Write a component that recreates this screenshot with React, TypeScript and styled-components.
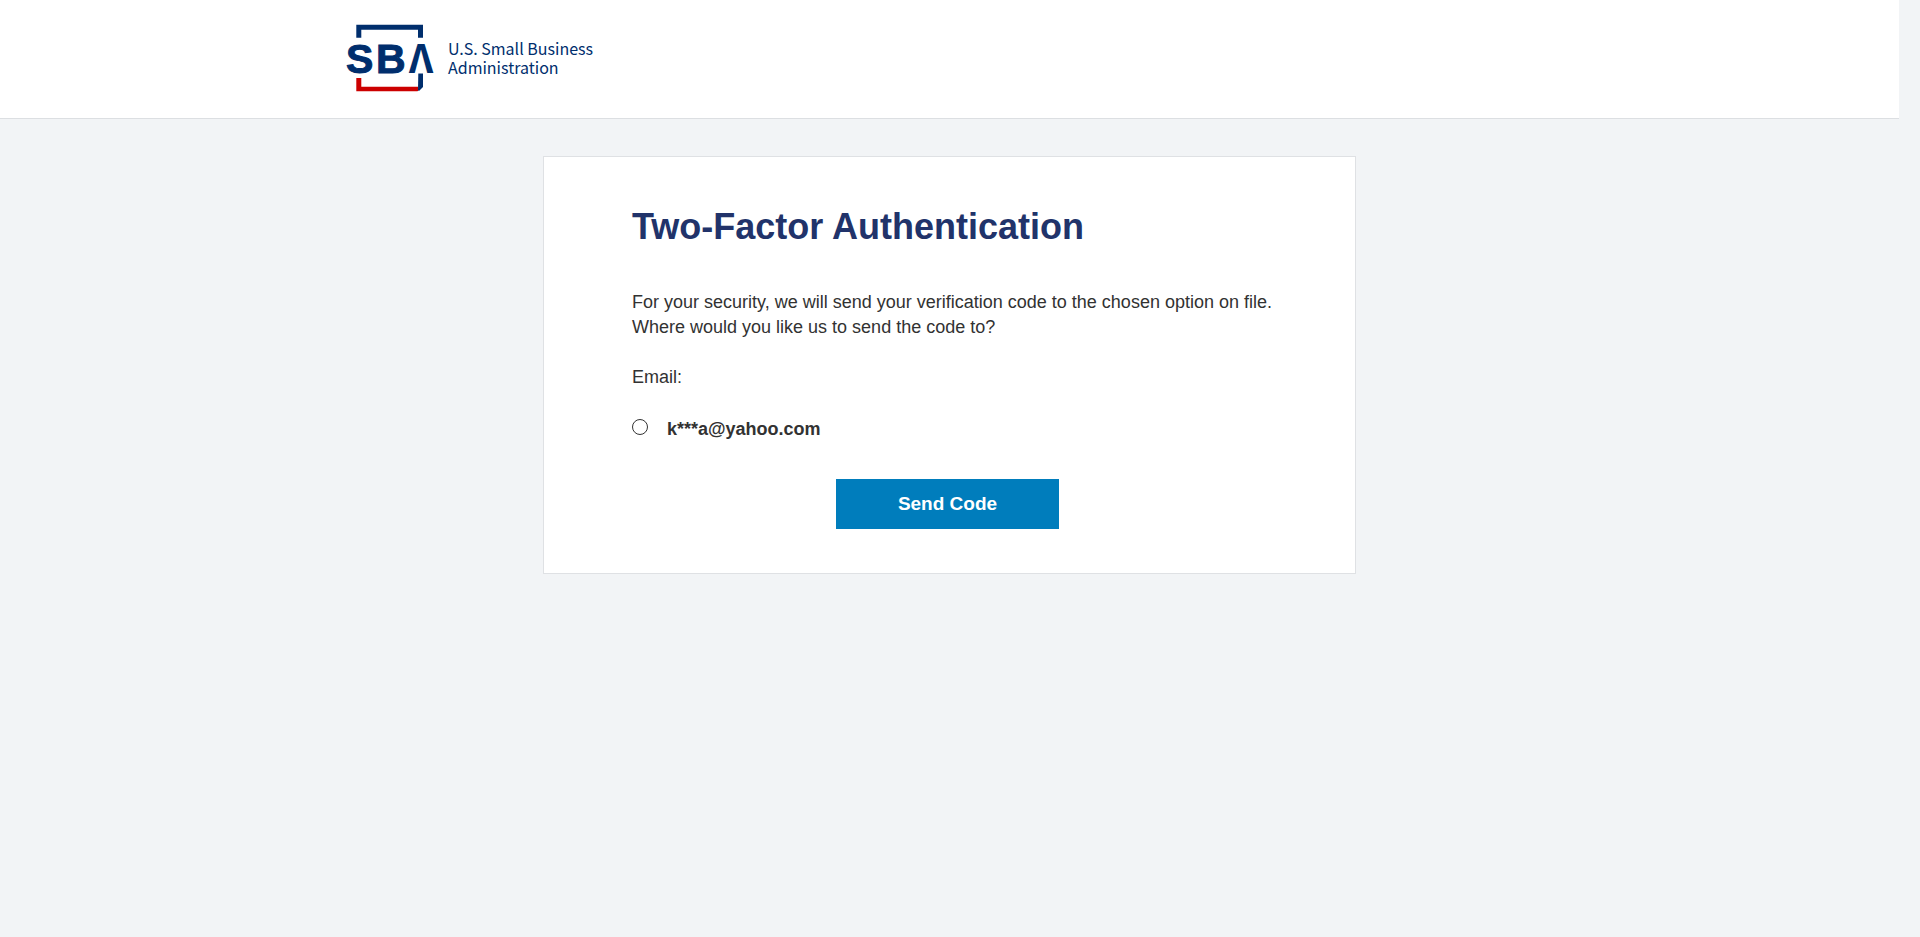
import React from "react";
import styled, { createGlobalStyle } from "styled-components";

const GlobalStyle = createGlobalStyle`
  *, *::before, *::after { box-sizing: border-box; }
  html { background: #f2f4f6; }
  body {
    margin: 0;
    color: #323232;
    font-family: "Liberation Sans", Arial, sans-serif;
    font-size: 18px;
    line-height: 25px;
  }
`;

const Page = styled.div`
  margin-right: 21px;
`;

const Header = styled.header`
  padding: 24px 0 26px 342px;
  background: #ffffff;
  border-bottom: 1px solid #dcdfe2;
`;

const Brand = styled.a`
  display: flex;
  width: fit-content;
  gap: 14px;
  color: #002e6d;
  text-decoration: none;
`;

const LogoMark = styled.svg`
  display: block;
  width: 92px;
  height: 68px;
`;

const LogoLetter = styled.text<{ $face: string; $size: number; $outline?: number }>`
  fill: #002e6d;
  stroke: #002e6d;
  stroke-width: ${(p) => p.$outline ?? 0};
  font-family: ${(p) => p.$face}, sans-serif;
  font-size: ${(p) => p.$size}px;
  font-weight: 700;
`;

const BrandName = styled.span`
  padding-top: 15px;
  font-family: "Noto Sans CJK JP", "Noto Sans", sans-serif;
  font-size: 16px;
  line-height: 19px;
`;

const Card = styled.main`
  width: 100%;
  max-width: 813px;
  margin: 37px auto;
  padding: 48px 80px 44px 88px;
  background: #ffffff;
  border: 1px solid #dfe1e4;
`;

const Title = styled.h1`
  margin: 0;
  color: #21336a;
  font-size: 36px;
  line-height: 44px;
`;

const Intro = styled.p`
  margin: 41px 0 25px;
`;

const Options = styled.fieldset`
  margin: 0;
  padding: 0;
  border: 0;
`;

const OptionsTitle = styled.legend`
  margin-bottom: 27px;
  padding: 0;
`;

const Option = styled.label`
  display: flex;
  gap: 19px;
  font-weight: bold;
`;

const Radio = styled.input`
  appearance: none;
  width: 16px;
  height: 16px;
  margin: 2px 0 0;
  border: 1px solid #323232;
  border-radius: 50%;
  &:checked { box-shadow: inset 0 0 0 3px #ffffff; background: #323232; }
`;

const Actions = styled.div`
  display: flex;
  justify-content: center;
  margin-top: 37px;
  padding-right: 12px;
`;

const SendButton = styled.button`
  width: 223px;
  height: 50px;
  border: 0;
  background: #007dbc;
  color: #ffffff;
  font: bold 19px/24px "Liberation Sans", Arial, sans-serif;
  cursor: pointer;
`;

function Logo() {
  return (
    <LogoMark viewBox="-4 0 92 68" aria-hidden="true">
      <path d="M10.3 13.7V.8H77V13.7H72V5.7H15.3V13.7Z" fill="#002e6d" />
      <path d="M10.3 54H15.3V62.7H72.3V66.5L71.5 67.3H10.3Z" fill="#cc0000" />
      <path d="M72.3 49.5H77V63L73 67L72 66.2Z" fill="#002e6d" />
      <LogoLetter x="0" y="49" $face='"Liberation Sans"' $size={41} $outline={1}>S</LogoLetter>
      <LogoLetter x="30" y="49" $face='"Liberation Sans"' $size={41} $outline={1}>B</LogoLetter>
      <LogoLetter x="63" y="49" $face='"Noto Sans CJK JP"' $size={39}>Λ</LogoLetter>
    </LogoMark>
  );
}

export default function App() {
  return (
    <>
      <GlobalStyle />
      <Page>
        <Header>
          <Brand href="#">
            <Logo />
            <BrandName>
              U.S. Small Business
              <br />
              Administration
            </BrandName>
          </Brand>
        </Header>
        <Card>
          <Title>Two-Factor Authentication</Title>
          <form onSubmit={(e) => e.preventDefault()}>
            <Intro>
              For your security, we will send your verification code to the chosen option on file.
              <br />
              Where would you like us to send the code to?
            </Intro>
            <Options>
              <OptionsTitle>Email:</OptionsTitle>
              <Option htmlFor="email-option">
                <Radio type="radio" id="email-option" name="delivery" />
                k***a@yahoo.com
              </Option>
            </Options>
            <Actions>
              <SendButton type="submit">Send Code</SendButton>
            </Actions>
          </form>
        </Card>
      </Page>
    </>
  );
}
